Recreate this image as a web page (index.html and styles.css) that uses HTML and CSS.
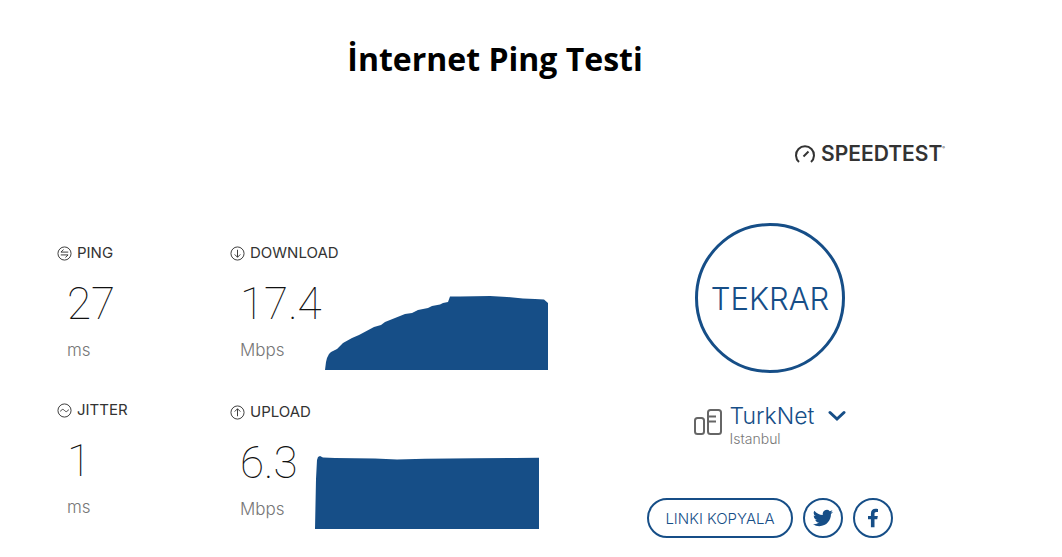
FILE: index.html
```html
<!DOCTYPE html>
<html lang="tr">
<head>
    <meta charset="UTF-8">
    <meta name="viewport" content="width=device-width, initial-scale=1.0">
    <title>İnternet Ping Testi</title>
    <link rel="stylesheet" href="styles.css">
</head>
<body>
    <div class="page">
        <h1 class="page-title">İnternet Ping Testi</h1>

        <div class="brand">
            <svg class="brand-icon" viewBox="0 0 22 20" aria-hidden="true">
                <path d="M5 18A9 9 0 1 1 17 18" />
                <path d="M9.500 12.500L14.500 7.500" />
            </svg>
            <span class="brand-name">SPEEDTEST</span>
            <sup class="brand-mark">®</sup>
        </div>

        <main class="content">
            <!-- Results -->
            <section class="results">
                <div class="column latency">
                    <div class="metric">
                        <h2 class="metric-label">
                            <svg class="metric-icon" viewBox="0 0 16 16" aria-hidden="true">
                                <circle cx="8" cy="8" r="7" />
                                <path d="M12 6.500H4.200L7 3.800M4 9.500h7.800L9 12.200" />
                            </svg>
                            PING
                        </h2>
                        <div class="reading">
                            <div class="value">27</div>
                            <div class="unit">ms</div>
                        </div>
                    </div>
                    <div class="metric">
                        <h2 class="metric-label">
                            <svg class="metric-icon" viewBox="0 0 16 16" aria-hidden="true">
                                <circle cx="8" cy="8" r="7" />
                                <path d="M3.800 9C5 6.200 6.600 6.400 8 8s3 1.800 4.200-1" />
                            </svg>
                            JITTER
                        </h2>
                        <div class="reading">
                            <div class="value">1</div>
                            <div class="unit">ms</div>
                        </div>
                    </div>
                </div>

                <div class="column speed">
                    <div class="metric">
                        <h2 class="metric-label">
                            <svg class="metric-icon" viewBox="0 0 16 16" aria-hidden="true">
                                <circle cx="8" cy="8" r="7" />
                                <path d="M8 4v8M5 9l3 3 3-3" />
                            </svg>
                            DOWNLOAD
                        </h2>
                        <div class="metric-body">
                            <div class="reading reading-download">
                                <div class="value">17.4</div>
                                <div class="unit">Mbps</div>
                            </div>
                            <svg class="chart" viewBox="0 0 225 75" role="img" aria-label="Download">
                                <path d="M0 75L1 67L2 63L4 59L6 57L12 54L18 48L27 43L34 40L49 32L56 30L60 27L70 23L80 19L87 18L93 15L103 13L107 11L115 9.500L118 8L123 7L125 1.500L135 1.500L165 1L182 2L198 3.500L210 4L219 4.500L223 8V75Z" />
                            </svg>
                        </div>
                    </div>
                    <div class="metric">
                        <h2 class="metric-label">
                            <svg class="metric-icon" viewBox="0 0 16 16" aria-hidden="true">
                                <circle cx="8" cy="8" r="7" />
                                <path d="M8 12V4M5 7l3-3 3 3" />
                            </svg>
                            UPLOAD
                        </h2>
                        <div class="metric-body">
                            <div class="reading reading-upload">
                                <div class="value">6.3</div>
                                <div class="unit">Mbps</div>
                            </div>
                            <svg class="chart" viewBox="0 0 225 75" role="img" aria-label="Upload">
                                <path d="M0 75L1 25L2 6L3 3L5 2L8 3.500L20 4L60 4.500L82 5.500L110 4.800L160 4.200L200 4L224 3.800V75Z" />
                            </svg>
                        </div>
                    </div>
                </div>
            </section>

            <!-- Controls -->
            <section class="panel">
                <button class="restart" type="button">TEKRAR</button>

                <button class="server" type="button">
                    <svg class="server-icon" viewBox="0 0 28 26" aria-hidden="true">
                        <rect x="1" y="9" width="9" height="16" rx="2.500" />
                        <rect x="14" y="1" width="13" height="24" rx="2.500" />
                        <path d="M14 7.500h8M14 12.500h8" />
                    </svg>
                    <span class="server-text">
                        <span class="server-name">TurkNet</span>
                        <span class="server-city">Istanbul</span>
                    </span>
                    <svg class="chevron" viewBox="0 0 18 12" aria-hidden="true">
                        <path d="M2 2.500L9 9L16 2.500" />
                    </svg>
                </button>

                <div class="share">
                    <button class="copy" type="button">LINKI KOPYALA</button>
                    <a class="social" href="#" aria-label="Twitter">
                        <svg class="social-icon" viewBox="0 0 24 24" aria-hidden="true">
                            <path d="M23.950 4.570a10 10 0 0 1-2.820.770 4.960 4.960 0 0 0 2.160-2.720c-.950.550-2 .950-3.130 1.180a4.920 4.920 0 0 0-8.380 4.480C7.690 8.090 4.070 6.130 1.640 3.160a4.930 4.930 0 0 0 1.520 6.570 4.900 4.900 0 0 1-2.230-.610v.060a4.920 4.920 0 0 0 3.950 4.830 5 5 0 0 1-2.210.080 4.940 4.940 0 0 0 4.600 3.420A9.870 9.870 0 0 1 0 19.540a13.990 13.990 0 0 0 7.550 2.210c9.050 0 14-7.500 14-13.980 0-.210 0-.420-.020-.630a9.940 9.940 0 0 0 2.460-2.550z" />
                        </svg>
                    </a>
                    <a class="social" href="#" aria-label="Facebook">
                        <svg class="social-icon" viewBox="0 0 24 24" aria-hidden="true">
                            <path d="M9.500 23V13.500H6V9.500h3.500V6.800C9.500 3 11.700 1 15 1c1.200 0 2.500.2 3 .3v3.600h-1.900c-1.700 0-2.300 1-2.300 2.200v2.400h4l-.7 4h-3.300V23z" />
                        </svg>
                    </a>
                </div>
            </section>
        </main>
    </div>
</body>
</html>
```

FILE: styles.css
```css
body {
    margin: 0;
    padding-right: 72px;
    background: #fff;
    color: #333;
    font-family: Inter, "Liberation Sans", sans-serif;
}

button {
    background: none;
    font-family: inherit;
    color: #164e87;
    cursor: pointer;
}

svg {
    fill: none;
    stroke: currentColor;
    flex-shrink: 0;
}

.page {
    max-width: 900px;
    margin: 0 auto;
}

.page-title {
    margin: 0;
    padding-top: 36px;
    font-family: "Open Sans", sans-serif;
    font-size: 32px;
    line-height: 46px;
    font-weight: 700;
    text-align: center;
    color: #000;
}

/* Logo */
.brand {
    display: flex;
    justify-content: flex-end;
    align-items: center;
    margin-top: 62px;
    height: 20px;
}

.brand-icon {
    width: 22px;
    height: 20px;
    margin-right: 5px;
    stroke-width: 2;
}

.brand-name {
    font-size: 21px;
    line-height: 20px;
    font-weight: 600;
}

.brand-mark {
    align-self: flex-start;
    font-size: 4px;
    line-height: 8px;
}

.content {
    display: grid;
    grid-template-columns: 11fr 7fr;
    margin-top: 59px;
}

/* Results */
.results {
    display: flex;
    padding: 20px 0 0 12px;
}

.column {
    display: flex;
    flex-direction: column;
}

.latency {
    width: 173px;
    gap: 40px;
}

.speed {
    gap: 32px;
}

.metric-label {
    display: flex;
    align-items: center;
    gap: 5px;
    margin: 0;
    font-size: 15px;
    line-height: 20px;
    font-weight: 400;
}

.metric-icon {
    width: 15px;
    height: 15px;
}

.metric-body {
    display: flex;
    align-items: flex-end;
    height: 107px;
}

.reading {
    box-sizing: border-box;
    height: 97px;
    padding: 16px 0 0 10px;
}

.metric-body .reading {
    align-self: flex-start;
}

.reading-download {
    width: 95px;
}

.reading-upload {
    width: 85px;
}

.value {
    font-family: Roboto, sans-serif;
    font-size: 44px;
    line-height: 50px;
    font-weight: 100;
    color: #111;
}

.unit {
    margin-top: 11px;
    font-size: 17px;
    line-height: 20px;
    font-weight: 300;
    color: #777;
}

.chart {
    width: 225px;
    height: 75px;
    fill: #164e87;
    stroke: none;
}

/* Controls */
.panel {
    display: flex;
    flex-direction: column;
    align-items: center;
}

.restart {
    width: 150px;
    height: 150px;
    padding: 0;
    border: 3px solid #164e87;
    border-radius: 50%;
    font-size: 31px;
    font-weight: 300;
}

.server {
    display: flex;
    align-items: flex-start;
    margin-top: 29px;
    padding: 0;
    border: none;
    text-align: left;
}

.server-icon {
    width: 28px;
    height: 26px;
    margin: 7px 8px 0 0;
    stroke: #666;
    stroke-width: 2;
}

.server-text {
    display: flex;
    flex-direction: column;
}

.server-name {
    font-size: 23px;
    line-height: 28px;
    font-weight: 300;
}

.server-city {
    font-size: 14px;
    line-height: 17px;
    font-weight: 300;
    color: #777;
}

.chevron {
    width: 18px;
    height: 12px;
    margin: 8px 0 0 14px;
    stroke-width: 3;
    stroke-linecap: round;
}

.share {
    display: flex;
    gap: 10px;
    margin-top: 51px;
}

.copy {
    height: 40px;
    padding: 0 16px;
    border: 2px solid #164e87;
    border-radius: 20px;
    font-size: 15px;
    font-weight: 300;
}

.social {
    box-sizing: border-box;
    display: flex;
    align-items: center;
    justify-content: center;
    width: 40px;
    height: 40px;
    border: 2px solid #164e87;
    border-radius: 50%;
    color: #164e87;
}

.social-icon {
    width: 20px;
    height: 20px;
    fill: currentColor;
    stroke: none;
}
```
